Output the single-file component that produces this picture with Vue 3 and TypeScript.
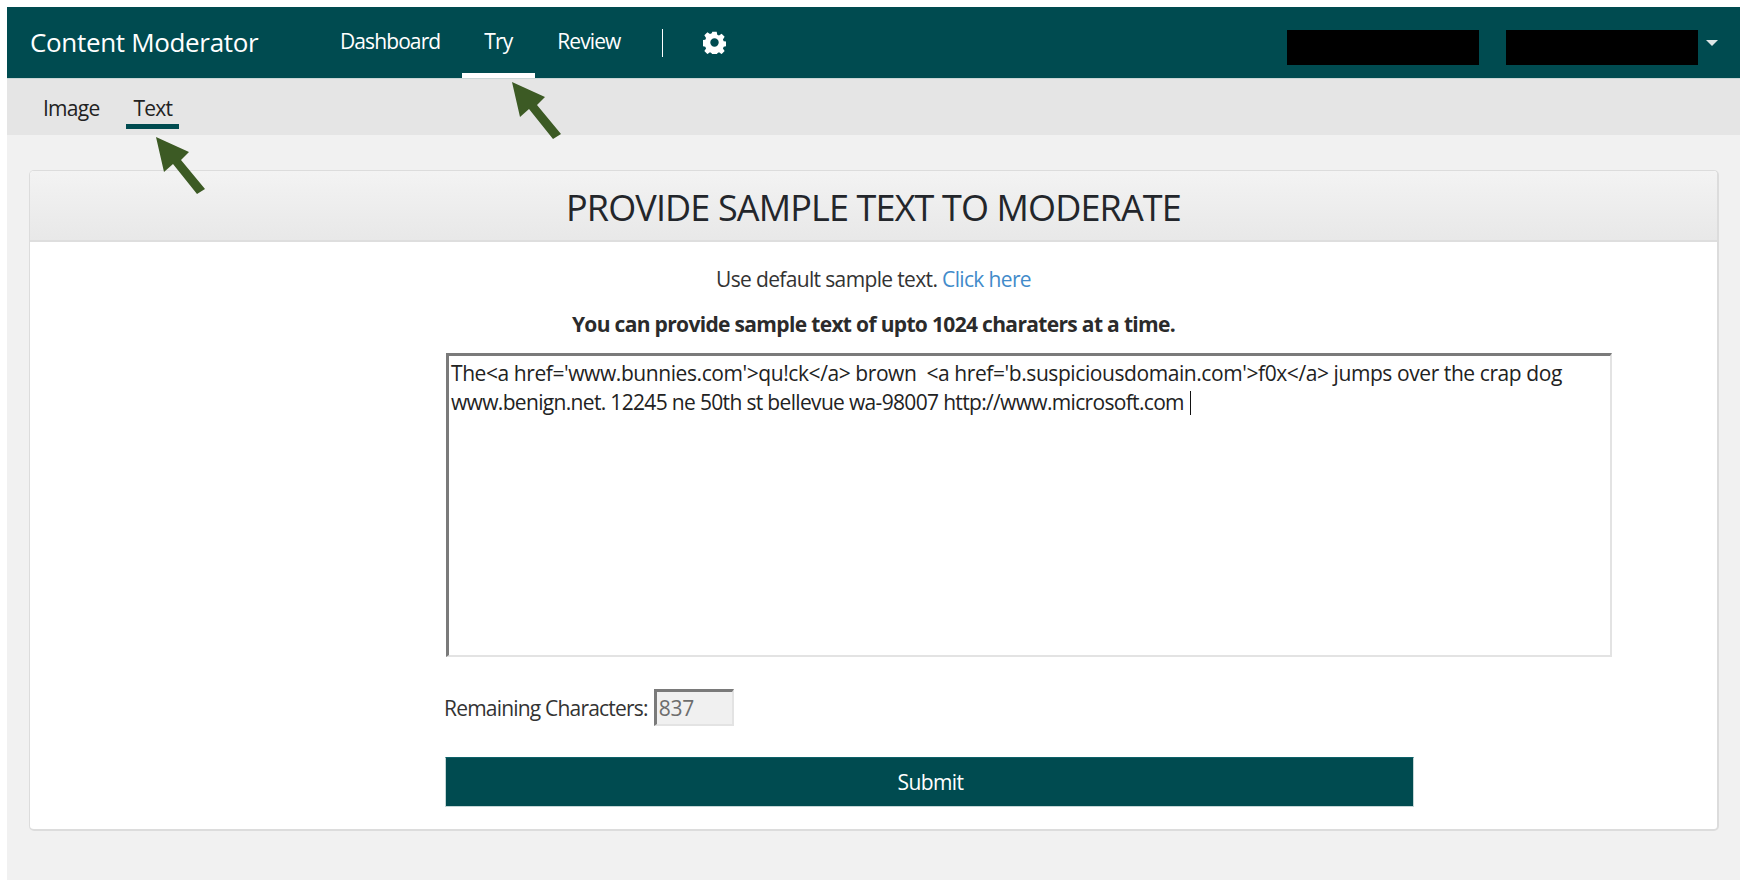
<script setup lang="ts">
const mainNav = [
  { label: 'Dashboard', active: false },
  { label: 'Try', active: true },
  { label: 'Review', active: false },
]
const subNav = [
  { label: 'Image', active: false },
  { label: 'Text', active: true },
]
const sampleLines = [
  "The<a href='www.bunnies.com'>qu!ck</a> brown  <a href='b.suspiciousdomain.com'>f0x</a> jumps over the crap dog",
  'www.benign.net. 12245 ne 50th st bellevue wa-98007 http://www.microsoft.com ',
]
const arrowPoints = '0,0 33,15 25,23 49,52 41,57 17,27 8,35'
</script>

<template>
  <div class="page">
    <div class="frame">
      <header class="topbar">
        <span class="brand">Content Moderator</span>
        <nav class="main-nav">
          <a v-for="item in mainNav" :key="item.label" class="main-link" :class="{ active: item.active }">{{ item.label }}</a>
        </nav>
        <span class="divider"></span>
        <svg class="gear" viewBox="0 0 24 24" aria-label="Settings">
          <path fill-rule="evenodd" d="M9.7 0.8h4.6l0.6 3.1 1.8 0.8 2.7-1.8 3.2 3.2-1.8 2.7 0.8 1.8 3 0.6v4.6l-3 0.6-0.8 1.8 1.8 2.7-3.2 3.2-2.7-1.8-1.8 0.8-0.6 3h-4.6l-0.6-3-1.8-0.8-2.7 1.8-3.2-3.2 1.8-2.7-0.8-1.8-3-0.6V9.6l3-0.6 0.8-1.8-1.8-2.7 3.2-3.2 2.7 1.8 1.8-0.8zM12 7.6a4.4 4.4 0 1 0 0 8.8 4.4 4.4 0 0 0 0-8.8z" />
        </svg>
        <div class="account">
          <span class="redacted"></span>
          <span class="redacted"></span>
          <span class="caret-down"></span>
        </div>
      </header>

      <nav class="sub-nav">
        <a v-for="item in subNav" :key="item.label" class="sub-link" :class="{ active: item.active }">{{ item.label }}</a>
      </nav>

      <main class="content">
        <section class="panel">
          <h1 class="panel-title">PROVIDE SAMPLE TEXT TO MODERATE</h1>
          <div class="panel-body">
            <p class="hint">Use default sample text. <a class="link">Click here</a></p>
            <p class="limit">You can provide sample text of upto 1024 charaters at a time.</p>
            <div class="form">
              <div class="textbox">
                <div v-for="line in sampleLines" :key="line" class="textbox-line">{{ line }}</div>
              </div>
              <div class="remaining">
                <label>Remaining Characters:</label>
                <span class="counter">837</span>
              </div>
              <button class="submit" type="button">Submit</button>
            </div>
          </div>
        </section>
      </main>
    </div>

    <!-- Annotation arrows drawn over the screenshot -->
    <svg class="arrow arrow-try" viewBox="0 0 50 58"><polygon :points="arrowPoints" /></svg>
    <svg class="arrow arrow-text" viewBox="0 0 50 58"><polygon :points="arrowPoints" /></svg>
  </div>
</template>

<style scoped>
.page {
  position: relative;
  width: 1751px;
  height: 888px;
  padding: 7px 11px 8px 7px;
  box-sizing: border-box;
  background: #fff;
  font-family: "Open Sans", "Noto Sans", sans-serif;
  color: #333;
  overflow: hidden;
}
.frame {
  height: 100%;
  display: flex;
  flex-direction: column;
  background: #f1f1f1;
}
.topbar {
  height: 72px;
  flex: none;
  display: flex;
  align-items: center;
  background: #004b50;
  color: #fff;
  border-bottom: 1px solid #c9d6d6;
  box-sizing: border-box;
}
.brand {
  width: 313px;
  padding: 0 0 2px 23px;
  box-sizing: border-box;
  font-size: 26px;
  letter-spacing: -0.33px;
  white-space: nowrap;
}
.main-nav {
  display: flex;
  align-self: stretch;
}
.main-link {
  display: flex;
  align-items: center;
  padding: 2px 22px 0;
  height: 71px;
  box-sizing: border-box;
  font-size: 21px;
  letter-spacing: -0.9px;
  border-bottom: 5px solid transparent;
}
.main-link:first-child {
  padding-left: 20px;
}
.main-link.active {
  padding-right: 23px;
  border-bottom-color: #fff;
}
.divider {
  width: 1px;
  height: 28px;
  margin-left: 20px;
  background: #fff;
}
.gear {
  width: 23px;
  height: 23px;
  margin-left: 40px;
  fill: #fff;
}
.account {
  margin-left: auto;
  display: flex;
  align-items: center;
}
.redacted {
  width: 192px;
  height: 35px;
  margin-top: 9px;
  margin-right: 27px;
  background: #000;
}
.redacted:nth-child(2) {
  margin-right: 8px;
}
.caret-down {
  width: 0;
  height: 0;
  margin-right: 22px;
  border-left: 6px solid transparent;
  border-right: 6px solid transparent;
  border-top: 6px solid #dfe6e6;
}
.sub-nav {
  height: 56px;
  flex: none;
  display: flex;
  padding-left: 29px;
  background: #e5e5e5;
  box-sizing: border-box;
}
.sub-link {
  height: 50px;
  margin-right: 20px;
  padding: 13px 7px 0;
  display: flex;
  align-items: center;
  box-sizing: border-box;
  font-size: 21px;
  letter-spacing: -0.75px;
  color: #222;
  border-bottom: 5px solid transparent;
}
.sub-link.active {
  border-bottom-color: #004b50;
}
.content {
  padding: 35px 21px 0 22px;
}
.panel {
  height: 661px;
  display: flex;
  flex-direction: column;
  background: #fff;
  border: 1px solid #dcdcdc;
  border-right-width: 2px;
  border-bottom-width: 2px;
  border-radius: 5px;
  box-sizing: border-box;
}
.panel-title {
  height: 71px;
  margin: 0;
  padding-top: 3px;
  flex: none;
  display: flex;
  align-items: center;
  justify-content: center;
  background: linear-gradient(#f3f3f3, #e8e8e8);
  border-bottom: 2px solid #dedede;
  border-radius: 4px 4px 0 0;
  box-sizing: border-box;
  font-size: 36px;
  font-weight: 400;
  letter-spacing: -0.87px;
  color: #23262b;
}
.panel-body {
  flex: 1;
  padding-top: 23px;
}
.hint,
.limit {
  margin: 0;
  text-align: center;
  font-size: 21px;
  letter-spacing: -0.65px;
  line-height: 28px;
}
.limit {
  margin-top: 17px;
  font-weight: 700;
  letter-spacing: -0.67px;
  color: #2b2b2b;
}
.link {
  color: #428bca;
}
.form {
  width: 1166px;
  margin: 15px 0 0 416px;
}
.textbox {
  width: 1166px;
  height: 304px;
  padding: 3px 2px 0;
  box-sizing: border-box;
  background: #fff;
  border: 2px solid;
  border-width: 3px 2px 2px 3px;
  border-color: #7a7a7a #e3e3e3 #e3e3e3 #7a7a7a;
  font-size: 21px;
  letter-spacing: -0.42px;
  line-height: 29px;
  color: #222;
}
.textbox-line {
  white-space: pre;
}
.textbox-line:last-child {
  letter-spacing: -0.67px;
}
.textbox-line:last-child::after {
  content: "";
  display: inline-block;
  width: 1px;
  height: 24px;
  margin-left: 1px;
  vertical-align: -5px;
  background: #111;
}
.remaining {
  display: flex;
  align-items: center;
  margin: 32px 0 31px -2px;
  gap: 6px;
  font-size: 21px;
  letter-spacing: -0.8px;
}
.counter {
  width: 80px;
  height: 37px;
  padding-left: 2px;
  display: flex;
  align-items: center;
  box-sizing: border-box;
  background: #f0f0f0;
  border: 2px solid;
  border-width: 3px 2px 2px 3px;
  border-color: #7a7a7a #e3e3e3 #e3e3e3 #7a7a7a;
  color: #6d6d6d;
  letter-spacing: -0.3px;
}
.submit {
  display: block;
  width: 969px;
  height: 50px;
  margin-left: -1px;
  padding-left: 8px;
  background: #004b50;
  border: 1px solid #c4d6d6;
  border-top-color: #0d6168;
  color: #fff;
  font-family: inherit;
  font-size: 21px;
  letter-spacing: -0.6px;
}
.arrow {
  position: absolute;
  width: 50px;
  height: 58px;
  fill: #3c5a24;
}
.arrow-try {
  left: 512px;
  top: 82px;
}
.arrow-text {
  left: 156px;
  top: 137px;
}
</style>
